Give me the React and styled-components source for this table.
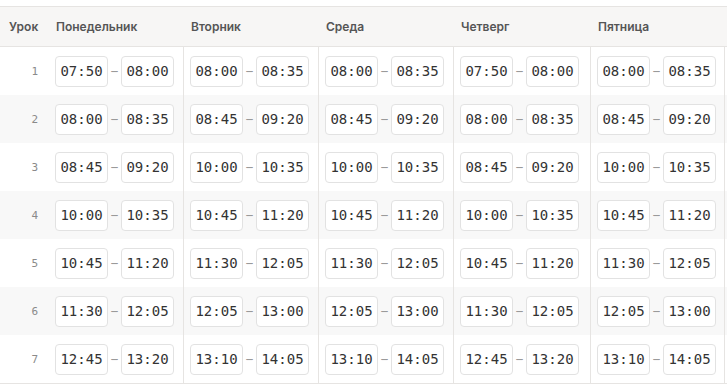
import React from 'react';
import styled, { createGlobalStyle } from 'styled-components';

const mon = [
  ['07:50', '08:00'],
  ['08:00', '08:35'],
  ['08:45', '09:20'],
  ['10:00', '10:35'],
  ['10:45', '11:20'],
  ['11:30', '12:05'],
  ['12:45', '13:20']
];

const tue = [
  ['08:00', '08:35'],
  ['08:45', '09:20'],
  ['10:00', '10:35'],
  ['10:45', '11:20'],
  ['11:30', '12:05'],
  ['12:05', '13:00'],
  ['13:10', '14:05']
];

const days = [
  { title: 'Понедельник', slots: mon },
  { title: 'Вторник', slots: tue },
  { title: 'Среда', slots: tue },
  { title: 'Четверг', slots: mon },
  { title: 'Пятница', slots: tue }
];

const GlobalStyle = createGlobalStyle`
  body {
    margin: 0;
    background: #ffffff;
    font-family: Inter, "Noto Sans", sans-serif;
  }
`;

export default function App() {
  return (
   <Page>
     <GlobalStyle />
     <Table>
       <HeaderRow>
         <HeadCell>Урок</HeadCell>
         {days.map((day) => (
           <HeadCell key={day.title} $day>{day.title}</HeadCell>
         ))}
       </HeaderRow>
       {mon.map((_, index) => (
         <Row key={`row-${index}`} $odd={index % 2 === 1}>
           <NumberCell>{index + 1}</NumberCell>
           {days.map((day, dayIndex) => (
             <DayCell
               key={day.title}
               $first={dayIndex === 0}
               $last={dayIndex === days.length - 1}
             >
               <TimeBox>{day.slots[index][0]}</TimeBox>
               <Dash>–</Dash>
               <TimeBox>{day.slots[index][1]}</TimeBox>
             </DayCell>
           ))}
         </Row>
       ))}
     </Table>
   </Page>
  );
}

const Page = styled.div`
  padding-top: 6px;
  width: 727px;
`;

const Table = styled.div`
  border-top: 1px solid #e6e4e2;
  border-bottom: 1px solid #e6e4e2;
`;

const columns = '48px 135px 135px 135px 137px 135px 2px';

const HeaderRow = styled.div`
  display: grid;
  grid-template-columns: ${columns};
  height: 39px;
  align-items: center;
  background: #f7f6f5;
  border-bottom: 1px solid #e6e4e2;
`;

const HeadCell = styled.div`
  padding-left: ${(p) => (p.$day ? '8px' : '9px')};
  color: #555555;
  font-size: 12px;
  font-weight: 600;
  white-space: nowrap;
`;

const Row = styled.div`
  display: grid;
  grid-template-columns: ${columns};
  height: 48px;
  background: ${(p) => (p.$odd ? '#f8f8f8' : '#ffffff')};
`;

const NumberCell = styled.div`
  display: flex;
  align-items: center;
  justify-content: flex-end;
  padding-right: 10px;
  color: #8a8a8a;
  font-family: "DejaVu Sans Mono", monospace;
  font-size: 11px;
`;

const DayCell = styled.div`
  display: flex;
  align-items: center;
  padding-left: 6px;
  border-left: 1px solid ${(p) => (p.$first ? 'transparent' : '#e6e4e2')};
  border-right: ${(p) => (p.$last ? '1px solid #e6e4e2' : 'none')};
`;

const TimeBox = styled.div`
  width: 53px;
  height: 31px;
  box-sizing: border-box;
  display: flex;
  align-items: center;
  justify-content: center;
  background: #ffffff;
  border: 1px solid #e2e2e2;
  border-radius: 4px;
  color: #333333;
  font-family: "DejaVu Sans Mono", monospace;
  font-size: 14px;
`;

const Dash = styled.span`
  width: 13px;
  text-align: center;
  color: #9a9a9a;
  font-size: 13px;
`;
